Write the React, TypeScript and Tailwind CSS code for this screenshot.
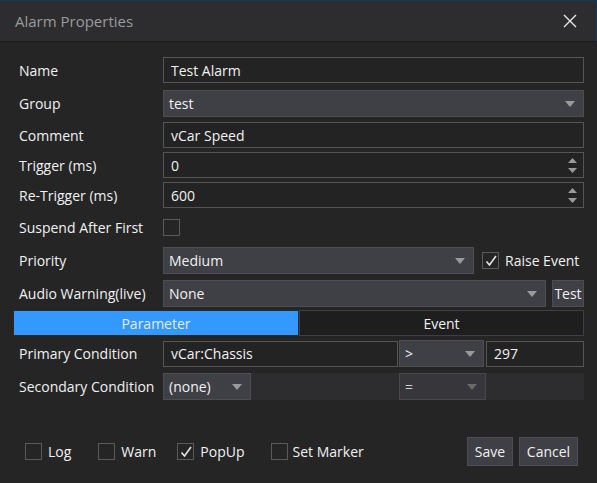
import React from 'react';

const FONT = { fontFamily: '"Open Sans", "Noto Sans", sans-serif' };

function Caret({ dim = false }: { dim?: boolean }) {
  return (
    <svg width="10" height="6" viewBox="0 0 10 6" className="shrink-0">
      <path d="M0 0 L10 0 L5 6 Z" fill={dim ? '#6a6a6a' : '#9a9a9a'} />
    </svg>
  );
}

function Check() {
  return (
    <svg width="14" height="14" viewBox="0 0 14 14">
      <path d="M2.5 7.5 L5.5 11 L12 2" stroke="#e6e6e6" strokeWidth="1.6" fill="none" />
    </svg>
  );
}

function Box({ checked = false }: { checked?: boolean }) {
  return (
    <div className="w-[17px] h-[17px] border border-[#5a5a5a] bg-[#252526] flex items-center justify-center shrink-0">
      {checked && <Check />}
    </div>
  );
}

function Label({ children }: { children: React.ReactNode }) {
  return <div className="w-[150px] pl-[6px] shrink-0 text-[#f1f1f1]">{children}</div>;
}

function TextBox({ value, className = '' }: { value: string; className?: string }) {
  return (
    <div className={`h-[26px] border border-[#555555] bg-[#232323] flex items-center px-[7px] text-[#f1f1f1] ${className}`}>
      {value}
    </div>
  );
}

function Select({ value, className = '', dim = false }: { value: string; className?: string; dim?: boolean }) {
  return (
    <div
      className={`h-[27px] border flex items-center justify-between pl-[5px] pr-[8px] ${
        dim ? 'border-[#48484c] bg-[#36363b] text-[#cfcfcf]' : 'border-[#4d4d52] bg-[#3f3f46] text-[#f1f1f1]'
      } ${className}`}
    >
      <span>{value}</span>
      <Caret dim={dim} />
    </div>
  );
}

function Spin({ value }: { value: string }) {
  return (
    <div className="h-[26px] border border-[#555555] bg-[#232323] flex items-center justify-between pl-[7px] pr-[6px] text-[#f1f1f1] flex-1">
      <span>{value}</span>
      <div className="flex flex-col gap-[5px]">
        <svg width="9" height="5" viewBox="0 0 9 5"><path d="M0 5 L9 5 L4.5 0 Z" fill="#9a9a9a" /></svg>
        <svg width="9" height="5" viewBox="0 0 9 5"><path d="M0 0 L9 0 L4.5 5 Z" fill="#9a9a9a" /></svg>
      </div>
    </div>
  );
}

export default function App() {
  return (
    <div className="w-[597px] h-[483px] bg-[#252526] text-[14px] flex flex-col overflow-hidden" style={FONT}>
      <div className="h-[42px] shrink-0 bg-[#2d2d30] border-t border-r border-[#10395c] border-b border-b-[#1c1c1c] flex items-center justify-between pl-[15px] pr-[19px]">
        <span className="text-[15px] text-[#9b9b9b]">Alarm Properties</span>
        <svg width="14" height="14" viewBox="0 0 14 14">
          <path d="M1 1 L13 13 M13 1 L1 13" stroke="#e8e8e8" strokeWidth="1.4" />
        </svg>
      </div>

      <div className="flex flex-col pl-[13px] pr-[13px]">
        <div className="flex items-center mt-[15px]">
          <Label>Name</Label>
          <TextBox value="Test Alarm" className="flex-1" />
        </div>
        <div className="flex items-center mt-[7px]">
          <Label>Group</Label>
          <Select value="test" className="flex-1" />
        </div>
        <div className="flex items-center mt-[5px]">
          <Label>Comment</Label>
          <TextBox value="vCar Speed" className="flex-1" />
        </div>
        <div className="flex items-center mt-[4px]">
          <Label>Trigger (ms)</Label>
          <Spin value="0" />
        </div>
        <div className="flex items-center mt-[4px]">
          <Label>Re-Trigger (ms)</Label>
          <Spin value="600" />
        </div>
        <div className="flex items-center mt-[11px] h-[17px]">
          <Label>Suspend After First</Label>
          <Box />
        </div>
        <div className="flex items-center mt-[11px]">
          <Label>Priority</Label>
          <Select value="Medium" className="w-[311px]" />
          <div className="flex items-center ml-[8px] gap-[6px] text-[#f1f1f1]">
            <Box checked />
            <span>Raise Event</span>
          </div>
        </div>
        <div className="flex items-center mt-[6px]">
          <Label>Audio Warning(live)</Label>
          <Select value="None" className="w-[383px]" />
          <div className="ml-[6px] h-[27px] flex-1 border border-[#4d4d52] bg-[#3f3f46] text-[#f1f1f1] flex items-center justify-center">
            Test
          </div>
        </div>
        <div className="flex mt-[3px] h-[26px]">
          <div className="w-[286px] bg-[#3399ff] border border-[#2a2a2a] flex items-center justify-center text-[#eaeaea]">
            Parameter
          </div>
          <div className="flex-1 bg-[#1e1e1e] border border-[#3f3f46] flex items-center justify-center text-[#f1f1f1]">
            Event
          </div>
        </div>
        <div className="flex items-center mt-[4px]">
          <Label>Primary Condition</Label>
          <TextBox value="vCar:Chassis" className="w-[235px] bg-[#1b1b1c]" />
          <Select value=">" className="w-[85px] ml-[1px]" />
          <TextBox value="297" className="flex-1 ml-[2px] bg-[#1b1b1c]" />
        </div>
        <div className="flex items-center mt-[6px]">
          <Label>Secondary Condition</Label>
          <Select value="(none)" className="w-[88px]" />
          <div className="h-[27px] w-[148px] bg-[#2d2d30]" />
          <Select value="=" className="w-[87px]" dim />
          <div className="h-[27px] flex-1 bg-[#2d2d30]" />
        </div>
      </div>

      <div className="flex items-center mt-[37px] pl-[25px] pr-[19px] text-[#f1f1f1]">
        <div className="flex items-center gap-[6px]"><Box /><span>Log</span></div>
        <div className="flex items-center gap-[6px] ml-[27px]"><Box /><span>Warn</span></div>
        <div className="flex items-center gap-[6px] ml-[21px]"><Box checked /><span>PopUp</span></div>
        <div className="flex items-center gap-[5px] ml-[26px]"><Box /><span>Set Marker</span></div>
        <div className="flex-1" />
        <div className="h-[29px] w-[46px] border border-[#4d4d52] bg-[#3f3f46] flex items-center justify-center">Save</div>
        <div className="h-[29px] w-[59px] ml-[6px] border border-[#4d4d52] bg-[#3f3f46] flex items-center justify-center">Cancel</div>
      </div>
    </div>
  );
}
